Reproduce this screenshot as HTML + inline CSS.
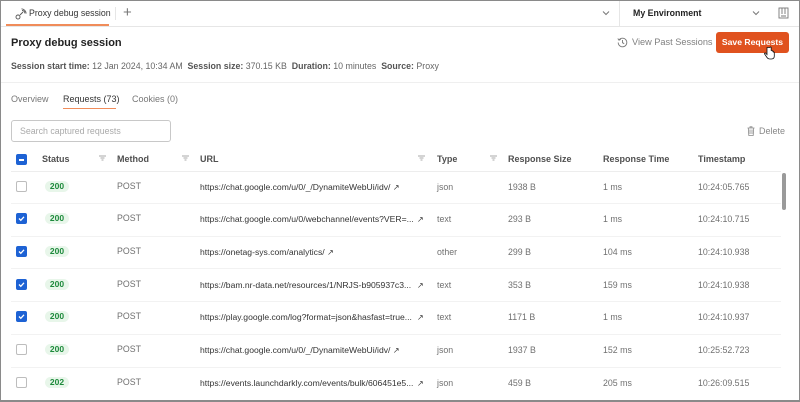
<!DOCTYPE html>
<html><head><style>
*{margin:0;padding:0;box-sizing:border-box}
body{width:800px;height:402px;overflow:hidden;background:#fff;font-family:"Liberation Sans",sans-serif;color:#212121;position:relative}
.a{position:absolute;white-space:nowrap}
.frame{position:absolute;left:0;top:0;width:800px;height:402px;border:1px solid #8a8a8a;border-bottom-width:2px}
.hl{position:absolute;height:1px;background:#ededed}
.cb{position:absolute;width:11px;height:11px;border-radius:2px;border:1px solid #bdbdbd;background:#fff}
.cb.on{background:#1d62d4;border-color:#1d62d4}
.badge{position:absolute;width:24px;height:11px;border-radius:6px;background:#e8f6ea;color:#1e8a3c;font-size:8.5px;font-weight:bold;text-align:center;line-height:11px}
.cell{position:absolute;font-size:8.8px;color:#707070;white-space:nowrap;line-height:11px}
.url{color:#333;font-size:8.6px}
.th{position:absolute;font-size:9px;font-weight:bold;color:#505050;top:154px}
.fi{position:absolute;top:155px;width:7px;height:7px}
</style></head><body>
<div class="hl" style="left:0;top:26px;width:800px;background:#e6e6e6"></div>
<div class="a" style="left:6px;top:24px;width:103px;height:2px;background:#f08c5a"></div>
<svg class="a" style="left:15px;top:8px" width="12" height="12" viewBox="0 0 12 12" fill="none" stroke="#555" stroke-width="0.9"><circle cx="3" cy="9" r="2"/><path d="M5 7 L8 4 M7 2.5 a3 3 0 0 1 3 3 M6.5 0.8 a5 5 0 0 1 4.7 4.7"/></svg>
<div class="a" style="left:29px;top:8px;font-size:8.8px;color:#333">Proxy debug session</div>
<div class="a" style="left:115px;top:7px;width:1px;height:13px;background:#e6e6e6"></div>
<div class="a" style="left:123px;top:4px;font-size:15px;color:#777">+</div>
<svg class="a" style="left:602px;top:10px" width="8" height="6" viewBox="0 0 8 6"><path d="M1 1.5 L4 4.5 L7 1.5" stroke="#777" fill="none"/></svg>
<div class="a" style="left:619px;top:1px;width:1px;height:25px;background:#e6e6e6"></div>
<div class="a" style="left:633px;top:8px;font-size:8.8px;font-weight:bold;color:#222">My Environment</div>
<svg class="a" style="left:752px;top:10px" width="8" height="6" viewBox="0 0 8 6"><path d="M1 1.5 L4 4.5 L7 1.5" stroke="#777" fill="none"/></svg>
<svg class="a" style="left:778px;top:7px" width="11" height="12" viewBox="0 0 11 12" fill="none" stroke="#777" stroke-width="0.9"><rect x="1" y="1" width="9" height="10"/><path d="M4 1v6M7 1v6M3 9h5"/></svg>
<div class="a" style="left:11px;top:37px;font-size:11px;font-weight:bold;color:#222">Proxy debug session</div>
<div class="a" style="left:11px;top:61px;font-size:8.8px;color:#666"><b style="color:#555">Session start time:</b> 12 Jan 2024, 10:34 AM &nbsp;<b style="color:#555">Session size:</b> 370.15 KB &nbsp;<b style="color:#555">Duration:</b> 10 minutes &nbsp;<b style="color:#555">Source:</b> Proxy</div>
<svg class="a" style="left:617px;top:37px" width="11" height="11" viewBox="0 0 11 11" fill="none" stroke="#777" stroke-width="0.9"><path d="M2 3 A4.3 4.3 0 1 1 1.2 5.5"/><path d="M0.8 1.5 L2 3.2 L3.8 2.4"/><path d="M5.5 3v2.7l1.7 1"/></svg>
<div class="a" style="left:632px;top:37px;font-size:9.2px;color:#808080">View Past Sessions</div>
<div class="a" style="left:716px;top:32px;width:73px;height:21px;background:#e0521f;border-radius:3px;color:#fff;font-size:8.6px;font-weight:bold;text-align:center;line-height:21px">Save Requests</div>
<svg class="a" style="left:764px;top:46px" width="11" height="14" viewBox="0 0 11 14"><path d="M3 1.5v7l-1.3-1.3c-.8-.7-1.6.2-1 .9L3 11.5c.6.8 1.5 1.5 3 1.5h1.5c1.8 0 2.8-1.3 2.8-3V6.5c0-.7-1-.7-1 0v-1c0-.7-1-.7-1 0v-.6c0-.7-1.1-.7-1.1 0V1.5c0-.8-1.2-.8-1.2 0z" fill="#fff" stroke="#111" stroke-width="0.8"/></svg>
<div class="hl" style="left:0;top:82px;width:800px;background:#efefef"></div>
<div class="a" style="left:11px;top:94px;font-size:9px;color:#777">Overview</div>
<div class="a" style="left:63px;top:94px;font-size:9px;color:#333">Requests (73)</div>
<div class="a" style="left:63px;top:108px;width:53px;height:1px;background:#f08c5a"></div>
<div class="a" style="left:132px;top:94px;font-size:9px;color:#777">Cookies (0)</div>
<div class="a" style="left:11px;top:120px;width:160px;height:22px;border:1px solid #c8c8c8;border-radius:3px"></div>
<div class="a" style="left:20px;top:126px;font-size:8.8px;color:#aaa">Search captured requests</div>
<svg class="a" style="left:747px;top:126px" width="8" height="10" viewBox="0 0 8 10" fill="none" stroke="#888" stroke-width="0.8"><path d="M0.5 2h7M3 2V.8h2V2M1.3 2l.5 7.5h4.4l.5-7.5M3 3.5v4.5M5 3.5v4.5"/></svg>
<div class="a" style="left:759px;top:126px;font-size:9px;color:#888">Delete</div>
<div class="cb on" style="left:16px;top:154px"><div style="position:absolute;left:2px;top:4px;width:5px;height:1.5px;background:#fff"></div></div>
<div class="th" style="left:42px">Status</div>
<div class="th" style="left:117px">Method</div>
<div class="th" style="left:200px">URL</div>
<div class="th" style="left:437px">Type</div>
<div class="th" style="left:508px">Response Size</div>
<div class="th" style="left:603px">Response Time</div>
<div class="th" style="left:698px">Timestamp</div>
<svg class="fi" style="left:99px" viewBox="0 0 7 7"><path d="M0 1h7M1.5 3h4M2.5 5h2" stroke="#aaa"/></svg>
<svg class="fi" style="left:182px" viewBox="0 0 7 7"><path d="M0 1h7M1.5 3h4M2.5 5h2" stroke="#aaa"/></svg>
<svg class="fi" style="left:418px" viewBox="0 0 7 7"><path d="M0 1h7M1.5 3h4M2.5 5h2" stroke="#aaa"/></svg>
<svg class="fi" style="left:490px" viewBox="0 0 7 7"><path d="M0 1h7M1.5 3h4M2.5 5h2" stroke="#aaa"/></svg>
<div class="hl" style="left:11px;top:171px;width:770px"></div>
<div class="a" style="left:782px;top:173px;width:4px;height:37px;background:#9a9a9a;border-radius:2px"></div>
<div id="rows"></div>
<script>
var d=[[0,"200","https://chat.google.com/u/0/_/DynamiteWebUi/idv/","json","1938 B","1 ms","10:24:05.765",0],
[1,"200","https://chat.google.com/u/0/webchannel/events?VER=...","text","293 B","1 ms","10:24:10.715",1],
[1,"200","https://onetag-sys.com/analytics/","other","299 B","104 ms","10:24:10.938",0],
[1,"200","https://bam.nr-data.net/resources/1/NRJS-b905937c3...","text","353 B","159 ms","10:24:10.938",1],
[1,"200","https://play.google.com/log?format=json&hasfast=true...","text","1171 B","1 ms","10:24:10.937",1],
[0,"200","https://chat.google.com/u/0/_/DynamiteWebUi/idv/","json","1937 B","152 ms","10:25:52.723",0],
[0,"202","https://events.launchdarkly.com/events/bulk/606451e5...","json","459 B","205 ms","10:26:09.515",1]];
var h="";
d.forEach(function(r,i){var c=186+i*32.7;var t=c-4.5;
h+='<div class="cb'+(r[0]?' on':'')+'" style="left:16px;top:'+(c-5.5)+'px">'+(r[0]?'<svg width="9" height="9" viewBox="0 0 9 9" style="position:absolute;left:0;top:0"><path d="M2 4.5l1.8 1.8L7 2.8" stroke="#fff" stroke-width="1.3" fill="none"/></svg>':'')+'</div>';
h+='<div class="badge" style="left:45px;top:'+(c-5.5)+'px">'+r[1]+'</div>';
h+='<div class="cell" style="left:117px;top:'+(t-1)+'px">POST</div>';
h+='<div class="cell url" style="left:200px;top:'+t+'px">'+r[2].replace(/&/g,"&amp;")+(r[7]?'':' <span style="font-size:8px">&#8599;</span>')+'</div>';
if(r[7])h+='<div class="cell url" style="left:417px;top:'+t+'px;font-size:8px">&#8599;</div>';
h+='<div class="cell" style="left:437px;top:'+t+'px">'+r[3]+'</div>';
h+='<div class="cell" style="left:508px;top:'+t+'px">'+r[4]+'</div>';
h+='<div class="cell" style="left:603px;top:'+t+'px">'+r[5]+'</div>';
h+='<div class="cell" style="left:698px;top:'+t+'px">'+r[6]+'</div>';
if(i<6)h+='<div class="hl" style="left:11px;top:'+(c+17)+'px;width:770px;background:#f2f2f2"></div>';
});
document.getElementById("rows").innerHTML=h;
</script>
<div class="frame"></div>
</body></html>
